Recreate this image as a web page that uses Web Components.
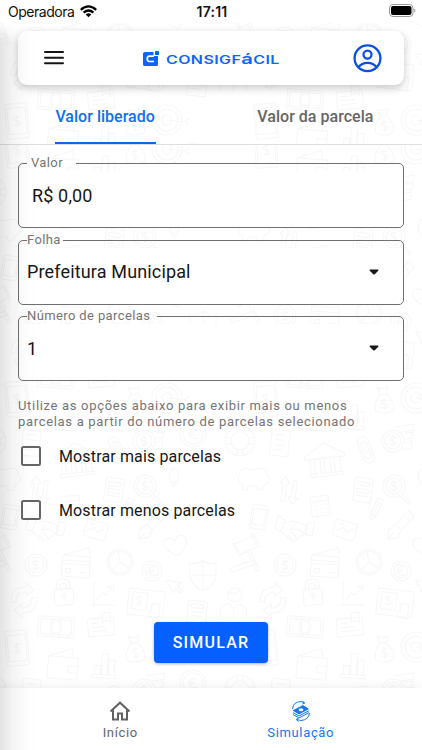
<!DOCTYPE html>
<html lang="pt-BR">
<head>
<meta charset="utf-8">
<title>ConsigFácil</title>
<style>
html,body{margin:0;height:100%}
body{font-family:Roboto,"Liberation Sans",sans-serif;background:#fff;overflow:hidden}
</style>
</head>
<body>
<cf-app></cf-app>
<script>
const define = (name, html, setup) => customElements.define(name, class extends HTMLElement {
  connectedCallback() {
    if (this.shadowRoot) return;
    const t = document.createElement('template');
    t.innerHTML = typeof html === 'function' ? html(this) : html;
    this.attachShadow({mode: 'open'}).append(t.content.cloneNode(true));
    if (setup) setup(this);
  }
});

/* Finance doodles: [x, y, rotation, markup], in a 249px repeating tile */
const coin = (r, s) => `<circle r="${r}"/><circle r="${r - 3}"/>` + (s === '$'
  ? '<path d="M3-3Q0-5-2.500-3.500Q-4-1 0 0Q4 1 2.500 3.500Q0 5-3 3M0-6V6"/>'
  : '<path d="M4-4Q-1-6-3-2V2Q-1 6 4 4M-5-1H2M-5 1H2"/>');
const dollar = '<path d="M3-3Q0-5-2.500-3.500Q-4-1 0 0Q4 1 2.500 3.500Q0 5-3 3M0-6V6"/>';
const box = (w, h, r = 1) => `<rect x="${-w / 2}" y="${-h / 2}" width="${w}" height="${h}" rx="${r}"/>`;
const doodles = [
  [76,20,-6,'<path d="M-20-5L0-17L20-5V-2H-20ZM-17 13H17V16H-17ZM-15-2V13M-11-2V13M-5-2V13M-1-2V13M5-2V13M9-2V13M15-2V13"/>'],
  [240,1,0,'<circle r="15"/><circle r="9"/><path d="M-4-14L-2-9M4-14L2-9M-4 14L-2 9M4 14L2 9M-14-4L-9-2M-14 4L-9 2M14-4L9-2M14 4L9 2"/>'],
  [31,3,6,box(18,26)+'<path d="M-5-8H5M-5-3H5M-5 2H5M-5 7H2"/>'],
  [117,10,-22,box(11,27,5)+box(6,18,3)+'<path d="M0-8V5"/>'],
  [144,1,0,coin(11,'$')+'<path d="M2-14L21-17L20-11L8-9M12-8L20-9L19-3L12-2M12 1L19 0L18 7L9 9"/>'],
  [5,38,0,'<path d="M-15-3Q-12-13-2-8L8-10Q14-9 13-2L16-1L15 4L10 7L8 12H3L2 8H-5L-7 12H-11L-12 6Q-17 4-15-3ZM-7-3H-6"/>'],
  [40,51,8,'<path d="M-7 11V-7H-10L-5-14L0-7H-3V11ZM3-11H7V6H10L5 13L0 6H3Z"/>'],
  [114,50,8,box(18,24)+'<path d="M-6-8H6V-4H-6ZM-6-1H6V3H-6ZM-6 6H6"/>'],
  [145,46,0,coin(11,'$')+'<path d="M8 8L17 16L15 18L6 10"/>'],
  [174,37,0,'<path d="M-3 5Q-8-5 0-9Q8-6 3 5ZM-3 7H3M-2 9H2"/>'],
  [71,66,-7,box(18,20)+'<path d="M-9-5H9M-5-1H-3M0-1H2M5-1H7M-5 3H-3M0 3H2M5 3H7M-5 7H-3M0 7H2M5 7H7"/>'],
  [10,77,9,box(16,24,2)+box(12,16,0)],
  [47,90,0,'<path d="M-18-14L-11-10L-15 1L-21-1ZM12-8L19-8L16 6L10 5ZM-12-7L-3-9L10-5L9 4L1 9Q-3 14-7 9L-15 1M-1-5L-5 0L2-1L9 4M-8 5L-3 10M-5 2L1 8"/>'],
  [96,90,17,box(22,17)+'<path d="M-8 3L-2-2L2 2L8-4M-8-5H-2"/>'],
  [127,69,24,'<path d="M-3-11H3V7L0 12L-3 7ZM-3-7H3M0-7V7M-3 7H3"/>'],
  [151,86,43,'<path d="M-4-17H4V2H-4ZM-4-10H4M-4 2L-6 10L0 18L6 10L4 2M0 18V9"/>'],
  [176,106,-12,'<path d="M0 10Q-16 0-10-8Q-4-12 0-5Q4-12 10-8Q16 0 0 10Z"/>'],
  [2,112,-25,'<path d="M-11-14L8-14V-2H-11ZM-13-15H-11V-1H-13ZM8-15H10V-1H8ZM-3-2V20H0V-2M-26 6L-1 8V13L-26 10Z"/>'],
  [36,125,0,coin(11,'$')],
  [76,124,4,'<path d="M-14-8L12-17L14-11M-14-8H14V13H-14ZM-14-3H14M-14 0H14M-10 5H-5V9H-10ZM4 8H10"/>'],
  [120,122,0,'<circle r="13"/><circle r="11"/><path d="M0 0L-2-11M0 0L9 6M0 0L-7 8"/>'],
  [152,131,0,coin(10,'€')],
  [203,135,0,'<path d="M-13-12Q-5-10 0-15Q5-10 13-12V2Q10 12 0 16Q-10 12-13 2ZM0-15V16M-13 0H13"/>'],
  [234,165,4,'<circle r="7" cy="-10"/><path d="M-13 13V4Q-11-1-4-1L0 5L4-1Q12 0 13 4V13M0 5V13M-7-12Q0-10 5-15"/>'],
  [24,160,0,'<path d="M-13 2Q-13-13 2-13V-17L10-10L2-4V-8Q-8-8-8 2ZM13-2Q13 13-2 13V17L-10 10L-2 4V8Q8 8 8-2Z"/>'],
  [64,157,-4,box(19,16)+'<path d="M-7-8Q-8-18 0-18Q8-18 7-8M-4-8Q-4-14 0-14Q4-14 4-8M0-2V4"/><circle r="2" cy="-2"/>'],
  [103,155,2,'<path d="M-9-13V12M-12 10H12M-6 5L-1-2L3 0L9-8M4-8L11-10L10-4"/>'],
  [146,163,6,box(36,26)+'<rect x="-14" y="-10" width="15" height="17"/><g transform="translate(-7,-2)">'+dollar+'</g><path d="M6 0H14V14H4V7H6Z"/>'],
  [175,146,-20,'<path d="M-6-8L7-1L2 1L6 7L3 9L0 3L-4 6Z"/>'],
  [197,172,6,box(19,22)+'<path d="M-6-8H6V-4H-6ZM-6 0H6M-6 4H6"/>'],
  [17,208,-5,box(22,35,2)+box(18,26,0)+dollar],
  [56,187,4,box(36,20)+box(31,15)+'<circle r="6"/><path d="M-4-10V10M4-10V10"/>'],
  [101,187,-5,box(26,18)+'<path d="M2-9V-14H10V-4L6-7L2-4ZM-9-4H-2M-9 0H4M-9 4H6"/>'],
  [105,223,4,'<path d="M-13 12H12V15H-13ZM-10 12V3H-4V12M-3 12V-9H3V12M4 12V-3H10V12"/>'],
  [135,209,-4,'<path d="M-3-6L-6-13L0-11L5-13L3-6ZM-3-6Q-11 2-9 11Q0 15 9 11Q11 2 3-6"/><g transform="translate(0,4)">'+dollar+'</g>'],
  [167,207,0,'<circle r="15"/><circle r="11"/><circle r="5"/><path d="M0 0L18 2L22-2M18 2L22 5"/>'],
  [63,225,5,'<path d="M-15-8H15V14H-15ZM-15-8L8-17L10-8M6 0H15V7H6Q3 3 6 0Z"/>'],
  [193,243,0,coin(13,'€')]
];
const tile = doodles.map(([x,y,r,m]) => `<g transform="translate(${x},${y}) rotate(${r})">${m}</g>`).join('');
let wraps = '';
for (const dx of [-249,0,249]) for (const dy of [-249,0,249]) wraps += `<use href="#t" x="${dx}" y="${dy}"/>`;

define('cf-doodles', el => `
<style>:host{position:absolute;inset:0;z-index:-1}svg{display:block;width:100%;height:100%}</style>
<svg aria-hidden="true"><defs><g id="t">${tile}</g>
<pattern id="p" width="249" height="249" y="${el.getAttribute('origin')}" patternUnits="userSpaceOnUse">
<g fill="none" stroke="#f7f7f7" stroke-width="1.100">${wraps}</g></pattern></defs>
<rect width="100%" height="100%" fill="url(#p)"/></svg>`);

define('cf-status', `
<style>
:host{display:grid;grid-template-columns:1fr auto 1fr;align-items:center;height:23px;padding:0 6px 0 8px;font-family:Inter,sans-serif;font-size:14px;color:#111;box-sizing:border-box}
.l{display:flex;align-items:center;gap:6px;margin-top:-1px}.op{letter-spacing:-.48px}
b{font-weight:600;letter-spacing:.2px;margin-top:-1px}
.r{justify-self:end;display:flex;margin-top:-3px}svg{display:block}
</style>
<div class="l"><span class="op">Operadora</span>
<svg width="17" height="13" viewBox="0 0 17 13" fill="none" stroke="#000" stroke-width="2.300"><path d="M.8 4.800Q8.500-2 16.200 4.800M3.600 7.700Q8.500 3.400 13.400 7.700"/><path d="M8.500 12.300L5.700 9.400Q8.500 7.200 11.300 9.400Z" fill="#000" stroke="none"/></svg></div>
<b>17:11</b>
<div class="r"><svg width="27" height="13" viewBox="0 0 27 13"><rect x=".5" y=".5" width="23.500" height="12" rx="3.500" fill="none" stroke="#999"/><rect x="2" y="2" width="20.500" height="9" rx="2" fill="#000"/><path d="M25.200 4.500Q27.500 6.500 25.200 8.500Z" fill="#999"/></svg></div>`);

define('cf-logo', `
<style>:host{display:block}svg{display:block}</style>
<svg width="138" height="20" viewBox="0 0 138 20">
<path d="M2 4H10.500V8H15V16.500Q15 18 13.500 18H1.500Q0 18 0 16.500V5.500Q0 4 2 4Z" fill="#0b66f5"/>
<rect x="12" y="3" width="4" height="4" rx=".5" fill="#0b66f5"/>
<path d="M11 8.200H6.500Q4.200 8.200 4.200 10.800Q4.200 13.500 6.500 13.500H11" fill="none" stroke="#fff" stroke-width="1.700"/>
<text transform="translate(23,16) scale(1.390,1)" font-family="Inter,sans-serif" font-weight="600" font-size="11.500" fill="#0b66f5" letter-spacing=".3">CONSIGF<tspan font-size="14.500">á</tspan>CIL</text>
</svg>`);

define('cf-toolbar', `
<style>
:host{display:flex;align-items:center;justify-content:space-between;height:54px;margin:8px 18px 0;padding:0 22px 0 26px;box-sizing:border-box;background:#fff;border-radius:9px;box-shadow:0 3px 9px rgba(0,0,0,.22)}
svg{display:block}cf-logo{margin-left:7px;margin-top:-1px}
</style>
<svg width="20" height="16" viewBox="0 0 20 16" stroke="#151515" stroke-width="2" stroke-linecap="round"><path d="M1 2H19M1 7.700H19M1 13.300H19"/></svg>
<cf-logo></cf-logo>
<svg width="29" height="29" viewBox="0 0 29 29" fill="none" stroke="#0b50dc" stroke-width="2.300"><circle cx="14.500" cy="14.200" r="12.900"/><circle cx="14.500" cy="10.600" r="4"/><path d="M5.500 23.200Q8.500 18.800 14.500 18.800T23.500 23.200"/></svg>`);

define('cf-tab', `
<style>
:host{display:block;position:relative;height:59px;padding-top:22px;box-sizing:border-box;font-size:16px;line-height:20px;font-weight:500;color:#666;letter-spacing:.02px;white-space:nowrap}
:host([active]){color:#1070e8}
:host([active])::after{content:"";position:absolute;left:0;right:-1px;bottom:0;height:2.500px;background:#0b66f5}
</style><slot></slot>`);

define('cf-header', `
<style>
:host{display:block;position:relative;z-index:0;height:122px;box-sizing:border-box;border-bottom:1px solid #dedede;overflow:hidden}
nav{display:grid;grid-template-columns:1fr 1fr;justify-items:center;padding-right:1.500px}
</style>
<cf-doodles origin="139"></cf-doodles>
<cf-toolbar></cf-toolbar>
<nav><cf-tab active>Valor liberado</cf-tab><cf-tab>Valor da parcela</cf-tab></nav>`);

define('cf-field', el => `
<style>
:host{display:block}
fieldset{margin:0;height:72px;box-sizing:border-box;border:1px solid #707070;border-radius:5px;padding:0 24px 0 ${el.getAttribute('inset')}px;min-width:0;
 background:linear-gradient(#fff,#fff) no-repeat 0 7px}
legend{margin-left:${el.getAttribute('shift')}px;padding:0 ${el.getAttribute('end')}px 0 ${el.getAttribute('start')}px;font-size:13px;line-height:13px;height:15px;color:#757575;letter-spacing:.38px}
.v{display:flex;align-items:center;justify-content:space-between;height:46px;padding-top:1px;font-size:18px;color:#161616;letter-spacing:.15px}
</style>
<fieldset><legend>${el.getAttribute('label')}</legend><div class="v"><slot></slot>
${el.hasAttribute('select') ? '<svg width="10" height="6" viewBox="0 0 10 6"><path d="M1 .5H9Q10 1 9 2L6 5Q5 6 4 5L1 2Q0 1 1 .5Z" fill="#161616"/></svg>' : ''}</div></fieldset>`);

define('cf-check', `
<style>
:host{display:flex;align-items:center;gap:18px;height:54px;padding-left:3px;font-size:16px;letter-spacing:.14px;color:#161616}
i{width:20px;height:20px;box-sizing:border-box;border:2px solid #666;border-radius:2.500px}
</style><i></i><span><slot></slot></span>`);

define('cf-button', `
<style>
:host{display:grid;place-items:center;width:114px;height:41px;border-radius:4px;background:#0560ff;color:#fff;font-size:16px;font-weight:500;letter-spacing:1.200px;text-indent:0;box-shadow:0 1px 3px rgba(0,0,0,.3)}
</style><slot></slot>`);

define('cf-form', `
<style>
:host{display:flex;flex-direction:column;position:relative;z-index:0;flex:1;padding:11px 18px 0;box-sizing:border-box}
.fields{display:grid;gap:4.700px}
p{margin:16.500px 0 0;font-size:13px;line-height:16px;letter-spacing:.68px;color:#757575;white-space:nowrap}
.checks{margin-top:-.4px}
cf-button{margin:85px 0 0 136px}
</style>
<cf-doodles origin="46"></cf-doodles>
<div class="fields">
<cf-field label="Valor" inset="13" shift="-5" start="4" end="13">R$ 0,00</cf-field>
<cf-field label="Folha" inset="8" shift="0" start="0" end="2" select>Prefeitura Municipal</cf-field>
<cf-field label="Número de parcelas" inset="8" shift="0" start="0" end="7" select>1</cf-field>
</div>
<p>Utilize as opções abaixo para exibir mais ou menos<br>parcelas a partir do número de parcelas selecionado</p>
<div class="checks"><cf-check>Mostrar mais parcelas</cf-check><cf-check>Mostrar menos parcelas</cf-check></div>
<cf-button>SIMULAR</cf-button>`);

define('cf-nav-item', `
<style>
:host{display:flex;flex-direction:column;align-items:center;padding-top:11.500px;font-size:13px;line-height:16px;color:#666;letter-spacing:.65px}
:host([active]){color:#1478ee}
::slotted(svg){display:block;height:22px;margin-bottom:3px}
</style><slot name="icon"></slot><span><slot></slot></span>`);

define('cf-nav', `
<style>
:host{display:grid;position:relative;z-index:0;grid-template-columns:1fr 1fr;height:62px;padding:0 31px 0 30px;background:#fff;box-shadow:0 -2px 10px rgba(0,0,0,.06)}
</style>
<cf-nav-item><svg slot="icon" width="22" height="22" viewBox="0 0 22 22" fill="none" stroke="#626262" stroke-width="2"><path d="M1.500 11.500L11 2.700L20.500 11.500M4 9.500V19.500H9V13.500H13V19.500H18V9.500"/></svg>Início</cf-nav-item>
<cf-nav-item active><svg slot="icon" width="20" height="22" viewBox="0 0 20 22" fill="none" stroke="#1478ee"><path d="M1.500 9Q2 2 10 1.500L13.500 3M11.500 1.200L13.700 3L11.500 4M18.500 13Q17.500 20 10 20.500L5.500 19.500M7.500 21.500L5.200 19.500L7.500 18"/><path d="M1.500 10.500L12 5L18 9L8 14.500Z" fill="#1478ee" stroke="none"/><ellipse cx="10" cy="9.800" rx="2.400" ry="1.500" fill="#fff" stroke="none"/><path d="M2 12.600L8 16L18 10.700M2 14.500L8 18L18 12.600"/></svg>Simulação</cf-nav-item>`);

define('cf-app', `
<style>
:host{display:flex;flex-direction:column;height:100vh;position:relative;overflow:hidden}
:host::after{content:"";position:absolute;z-index:2;left:0;top:23px;bottom:0;width:36px;pointer-events:none;background:linear-gradient(90deg,rgba(0,0,0,.11),rgba(0,0,0,.045) 35%,rgba(0,0,0,.01) 70%,transparent);mask-image:linear-gradient(transparent,#000 20px)}
</style>
<cf-status></cf-status><cf-header></cf-header><cf-form></cf-form><cf-nav></cf-nav>`);
</script>
</body>
</html>
